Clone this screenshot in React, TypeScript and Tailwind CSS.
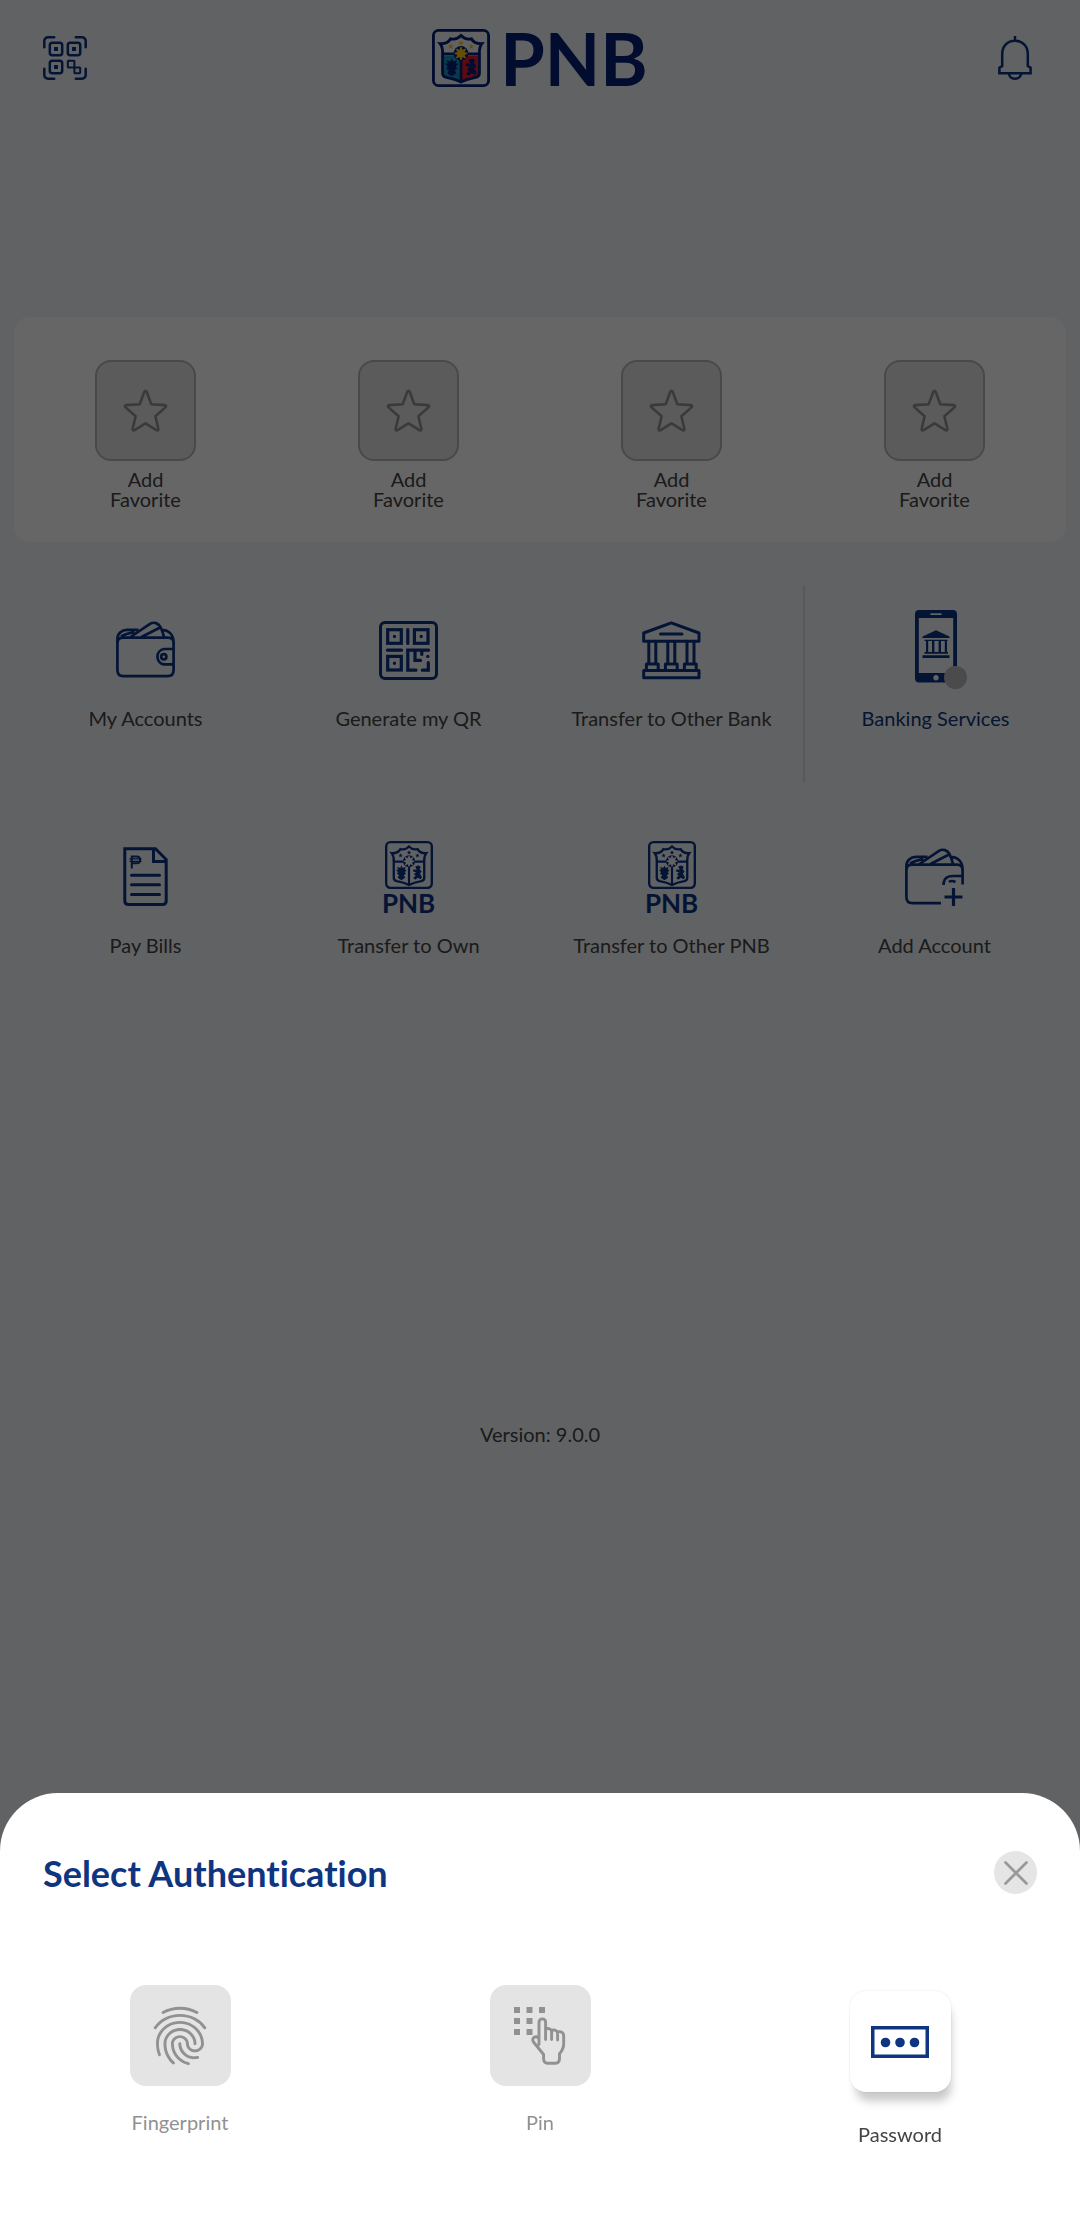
import type { ReactNode } from "react";
import { MdFingerprint } from "react-icons/md";

const SHIELD =
  "M28.5 6.5C25.5 9.6 22 10.6 18.3 9.6C16.4 13 12.6 14.7 8 14.4C10.4 17.5 10.6 20.5 10.4 24V43.5C10.4 46 11.6 47 14 47.6C19.5 48.6 24 49.8 28.5 52.2C33 49.8 37.5 48.6 43 47.6C45.4 47 46.6 46 46.6 43.5V24C46.4 20.5 46.6 17.5 49 14.4C44.4 14.7 40.6 13 38.7 9.6C35 10.6 31.5 9.6 28.5 6.5Z";
const EAGLE =
  "M19.5 29L21 32L24.5 30.5L23.5 34L26 34L23.5 37L25 39L22.3 40.5L24 43.5L19.5 46.5L15 43.5L16.7 40.5L14 39L15.5 37L13 34L15.5 34L14.5 30.5L18 32Z";
const LION =
  "M36 30L40 29L42.5 31L41 33.5L43.5 36L41.5 39L44 43L42 45.5L39 43.5L36 46L33.5 44L36.5 41L34 39.5L37 37.5L33 36L34 33.5L37.5 34.5Z";

function star(cx: number, cy: number, r: number) {
  return Array.from({ length: 10 }, (_, i) => {
    const a = (Math.PI / 5) * i - Math.PI / 2;
    const d = i % 2 ? r * 0.42 : r;
    return `${(cx + d * Math.cos(a)).toFixed(2)},${(cy + d * Math.sin(a)).toFixed(2)}`;
  }).join(" ");
}

function sunburst(cx: number, cy: number, outer: number, inner: number) {
  return Array.from({ length: 32 }, (_, i) => {
    const a = (Math.PI / 16) * i - Math.PI / 32;
    const d = i % 4 < 2 ? outer : inner;
    return `${(cx + d * Math.cos(a)).toFixed(2)},${(cy + d * Math.sin(a)).toFixed(2)}`;
  }).join(" ");
}

function Emblem({ colored = false, className }: { colored?: boolean; className: string }) {
  const gold = colored ? "#ffc20e" : "currentColor";
  return (
    <svg viewBox="0 0 57 57" className={className} fill="none" stroke="currentColor" aria-hidden="true">
      <rect x="1.4" y="1.4" width="54.2" height="54.2" rx="5" strokeWidth="2.8" />
      {colored && (
        <>
          <path d="M10 26H28V52L13 47L10 45Z" fill="#1695c4" stroke="none" />
          <path d="M29 26H47V45L44 47L29 52Z" fill="#e31b2b" stroke="none" />
        </>
      )}
      <path d={SHIELD} strokeWidth="2.8" />
      <path d="M10 24.5H47M28.5 24V52" strokeWidth="2.6" />
      <path d={EAGLE} fill="currentColor" stroke="none" />
      <path d={LION} fill="currentColor" stroke="none" />
      <circle cx="28.5" cy="24" r="7.2" fill="currentColor" stroke="none" />
      <polygon points={sunburst(28.5, 24, 6.4, 4.2)} fill={colored ? gold : "#f3f5f7"} stroke="none" />
      <polygon points={star(18.5, 17.2, 2.8)} fill={gold} stroke="none" />
      <polygon points={star(28.5, 13.8, 2.8)} fill={gold} stroke="none" />
      <polygon points={star(38.5, 17.2, 2.8)} fill={gold} stroke="none" />
    </svg>
  );
}

function ScanIcon() {
  return (
    <svg viewBox="0 0 44 44" className="size-11" fill="none" stroke="currentColor" strokeWidth="2.5" strokeLinecap="round" aria-hidden="true">
      <path d="M1.3 11.2V5A3.7 3.7 0 0 1 5 1.3H11.2M32.8 1.3H39A3.7 3.7 0 0 1 42.7 5V11.2M42.7 32.8V39A3.7 3.7 0 0 1 39 42.7H32.8M11.2 42.7H5A3.7 3.7 0 0 1 1.3 39V32.8" />
      <rect x="6.8" y="6.8" width="12.4" height="12.4" rx="2.5" />
      <rect x="24.8" y="6.8" width="12.4" height="12.4" rx="2.5" />
      <rect x="6.8" y="24.8" width="12.4" height="12.4" rx="2.5" />
      <rect x="24.8" y="24.8" width="6.6" height="6.6" rx="0.6" strokeWidth="2" />
      <rect x="31.4" y="31.4" width="5.8" height="5.8" rx="0.6" strokeWidth="2" />
      <path d="M11 11H15V15H11ZM29 11H33V15H29ZM11 29H15V33H11Z" fill="currentColor" stroke="none" />
    </svg>
  );
}

function BellIcon() {
  return (
    <svg viewBox="0 0 34 44" className="h-11 w-[34px]" fill="none" stroke="currentColor" strokeWidth="2.5" aria-hidden="true">
      <path d="M17 0V5M4.2 30V18C4.2 10.2 9.6 4.8 17 4.8S29.8 10.2 29.8 18V30L32.6 31.8V37.3H1.4V31.8Z" />
      <path d="M10.8 37.6C11.4 41 13.8 42.7 17 42.7S22.6 41 23.2 37.6" />
    </svg>
  );
}

function StarIcon() {
  return (
    <svg viewBox="-1 -1 45 43" className="h-[43px] w-[45px]" fill="none" stroke="currentColor" strokeWidth="2.6" strokeLinejoin="round" aria-hidden="true">
      <path d="M20.3 1.8Q21.5 -.2 22.7 1.8L27.3 14.2L40.8 15.1Q43 15.7 41.4 17.4L31.4 26.3L34.4 39Q34.4 41.2 32.4 40.2L21.5 33.3L10.6 40.2Q8.6 41.2 8.6 39L11.6 26.3L1.6 17.4Q0 15.7 2.2 15.1L15.7 14.2Z" />
    </svg>
  );
}

const walletTop =
  "M2.4 22V18C2.4 12.500 6.500 8.900 12 8.900H23.500M6 15.700C10.500 12.800 15 12 19.500 11.200M15.500 16L35 2.900C39 .400 43.500 2.400 45.400 5.800Q47.600 10 49 16M26.500 16L44.600 6.800M46 8.900C53 8.900 58.600 12.500 58.600 22M2.400 22Q2.400 16.600 8 16.600H53Q58.600 16.600 58.600 22";

function WalletIcon() {
  return (
    <svg viewBox="0 0 61 58" className="h-[58px] w-[61px]" fill="none" stroke="currentColor" strokeWidth="2.7" aria-hidden="true">
      <path d={walletTop} />
      <path d="M2.4 21V49Q2.4 55.2 8.5 55.2H52.5Q58.6 55.2 58.6 49V21" />
      <path d="M58.6 28H49A7.8 7.8 0 0 0 49 43.4H58.6" />
      <circle cx="48.8" cy="35.7" r="2.6" />
    </svg>
  );
}

function WalletPlusIcon() {
  return (
    <svg viewBox="0 0 61 58" className="h-[58px] w-[61px]" fill="none" stroke="currentColor" strokeWidth="2.7" aria-hidden="true">
      <path d={walletTop} />
      <path d="M2.4 21V49Q2.4 55.2 8.5 55.2H37M58.6 21V36.5" />
      <path d="M39.6 37V35Q40.5 28 49 28H58.6M45 34Q47.5 32 51.5 34" />
      <path d="M49.5 40V58M40.5 49H58.5" strokeWidth="3.2" />
    </svg>
  );
}

function QrIcon() {
  return (
    <svg viewBox="0 0 59 59" className="size-[59px]" fill="none" stroke="currentColor" strokeWidth="3.2" strokeLinecap="round" aria-hidden="true">
      <rect x="1.5" y="1.5" width="56" height="56" rx="4.5" strokeWidth="3" />
      <rect x="8.7" y="8.7" width="13.6" height="13.6" />
      <rect x="35.4" y="8.7" width="13.6" height="13.6" />
      <rect x="8.7" y="35.4" width="13.6" height="13.6" />
      <path d="M28.8 8.5V22.5M8.5 29.2H22.5M49.5 29.2H28.8V49.2H37M36 29.2V39.4H41.5M42.8 29.2V33.5M49.3 41.5V49.2H43.3" />
      <path d="M15.5 15.5h.01M42.2 15.5h.01M15.5 42.2h.01M48.8 35.4h.01" strokeWidth="3.4" />
    </svg>
  );
}

function BankIcon() {
  return (
    <svg viewBox="0 0 59 59" className="size-[59px]" fill="none" stroke="currentColor" strokeWidth="3" strokeLinejoin="round" strokeLinecap="round" aria-hidden="true">
      <path d="M1.7 12L29.3 1.9L57 12V20.3H1.7ZM18.5 13H40" />
      <path d="M6.8 20.3V42M13.8 20.3V42M25.8 20.3V42M32.8 20.3V42M45 20.3V42M52 20.3V42" />
      <path d="M4.4 49V43H16.2V49M23.4 49V43H35.2V49M42.4 49V43H54.2V49" />
      <rect x="1.7" y="49.4" width="55.3" height="7.4" />
    </svg>
  );
}

function PhoneBankIcon() {
  return (
    <svg viewBox="0 0 64 80" className="h-20 w-16" fill="currentColor" aria-hidden="true">
      <path
        fillRule="evenodd"
        d="M15 0H49Q53 0 53 4V68.500Q53 72.500 49 72.500H15Q11 72.500 11 68.500V4Q11 0 15 0ZM14.800 8V63H49.200V8ZM26.500 3.200V5H37.500V3.200ZM32 65A2.700 2.700 0 1 0 32 70.400A2.700 2.700 0 1 0 32 65Z"
      />
      <path d="M18.500 26.500L32 20.300L45.500 26.500V28H18.500ZM20.500 29.700H43.500V31H20.500ZM22 31H24.200V42H22ZM28 31H30.400V42H28ZM34.600 31H37V42H34.600ZM40.800 31H43V42H40.800ZM20.500 42H44V43.700H20.500ZM18.500 45.200H45.500V48H18.500Z" />
      <circle cx="51.500" cy="67.500" r="11.500" fill="#bbbbbb" />
    </svg>
  );
}

function BillIcon() {
  return (
    <svg viewBox="0 0 45 60" className="h-[60px] w-[45px]" fill="none" stroke="currentColor" strokeWidth="3" strokeLinecap="round" aria-hidden="true">
      <path d="M1.8 1.8H32.500L43.200 12.500V54Q43.200 57.600 39.500 57.600H5.500Q1.800 57.600 1.800 54ZM30.500 2V14.400H43M8.500 28.200H36.500M8.500 37.800H36.500M8.500 47.400H36.500" />
      <path d="M8.800 21.500V9.500H13.500C18.300 9.500 18.300 16.300 13.500 16.300H8.800" strokeWidth="2" strokeLinecap="butt" />
      <path d="M6.500 11.800H18.500M6.500 14.400H18.500" strokeWidth="1.300" strokeLinecap="butt" />
    </svg>
  );
}

function PnbIcon() {
  return (
    <span className="flex flex-col items-center gap-1">
      <Emblem className="size-12" />
      <span className="text-[26px] leading-5 font-bold">PNB</span>
    </span>
  );
}

function PinIcon() {
  return (
    <svg viewBox="0 0 52 58" className="h-[58px] w-[52px]" fill="none" stroke="currentColor" strokeWidth="2.900" strokeLinejoin="round" strokeLinecap="round" aria-hidden="true">
      <path
        d="M0 0H6V6H0ZM12.500 0H18.500V6H12.500ZM25 0H31V6H25ZM0 11H6V17H0ZM12.500 11H18.500V17H12.500ZM0 22H6V28H0ZM12.500 22H18.500V28H12.500Z"
        fill="currentColor"
        stroke="none"
      />
      <path d="M25 37.500V15.200A3.300 3.300 0 0 1 31.600 15.200V32.500M31.600 21.700C35 21 37.600 22 37.600 25V32.500M37.600 23.200C41 22.500 43.600 23.500 43.600 26.500V33M43.600 24.800C47.500 24.200 49.700 25.500 49.700 29V36.500C49.700 41 48.500 43.500 45.500 46.800V51.500C45.500 55 44 56.200 41.500 56.200H33.500C31 56.200 29.600 55 29.600 51.500V47.500L19.500 35C17.500 32 20 29.500 22.500 29.800L25 31.500" />
    </svg>
  );
}

function PasswordIcon() {
  return (
    <svg viewBox="0 0 58 32" className="h-8 w-[58px]" fill="none" stroke="currentColor" strokeWidth="3.500" aria-hidden="true">
      <rect x="1.750" y="1.750" width="54.500" height="28.500" />
      <path d="M14.500 16.500h.01M29 16.500h.01M43.500 16.500h.01" strokeWidth="9.600" strokeLinecap="round" />
    </svg>
  );
}

type Service = { label: string; icon: ReactNode; highlighted?: boolean };

const services: Service[] = [
  { label: "My Accounts", icon: <WalletIcon /> },
  { label: "Generate my QR", icon: <QrIcon /> },
  { label: "Transfer to Other Bank", icon: <BankIcon /> },
  { label: "Banking Services", icon: <PhoneBankIcon />, highlighted: true },
  { label: "Pay Bills", icon: <BillIcon /> },
  { label: "Transfer to Own", icon: <PnbIcon /> },
  { label: "Transfer to Other PNB", icon: <PnbIcon /> },
  { label: "Add Account", icon: <WalletPlusIcon /> },
];

function ServiceButton({ label, icon, highlighted }: Service) {
  return (
    <button
      type="button"
      className={
        highlighted
          ? "flex h-[198px] flex-col items-center gap-4 border-l-2 border-[#dcdee0] pt-[25px] text-[#0f3580]"
          : "flex h-[198px] flex-col items-center gap-4 pt-[25px] text-[#444444]"
      }
    >
      <span className="flex h-20 items-center justify-center text-[#0c3384]">{icon}</span>
      <span className="text-xl leading-6 whitespace-nowrap">{label}</span>
    </button>
  );
}

export default function App() {
  return (
    <div className="min-h-screen bg-[#f3f5f7] font-['Lato','Liberation_Sans',sans-serif] text-[#444444] [font-variant-ligatures:none]">
      <header className="flex items-center justify-between px-[43px] pt-[29px] text-[#0c3384]">
        <button type="button" aria-label="Scan QR code">
          <ScanIcon />
        </button>
        <h1 className="flex items-center gap-2.5 text-[#031e73]">
          <Emblem colored className="size-[58px]" />
          <span className="text-[72px] leading-[56px] font-bold">PNB</span>
        </h1>
        <button type="button" aria-label="Notifications" className="flex w-11 justify-center">
          <BellIcon />
        </button>
      </header>

      <main>
        <section aria-label="Favorites" className="mx-3.5 mt-[230px] grid grid-cols-4 rounded-2xl bg-white pt-[43px] pb-[33px]">
          {[1, 2, 3, 4].map((slot) => (
            <button key={slot} type="button" className="flex flex-col items-center gap-2">
              <span className="flex size-[101px] items-center justify-center rounded-2xl border-2 border-[#b6b6b6] bg-[#e4e4e4] text-[#919191]">
                <StarIcon />
              </span>
              <span className="w-20 text-xl leading-5">Add Favorite</span>
            </button>
          ))}
        </section>

        <section aria-label="Services" className="mx-3.5 mt-[43px] grid grid-cols-4 gap-y-[29px]">
          {services.map((service) => (
            <ServiceButton key={service.label} {...service} />
          ))}
        </section>

        <p className="mt-[412px] text-center text-xl leading-6">Version: 9.0.0</p>
      </main>

      <div className="fixed inset-0 flex flex-col justify-end bg-black/60">
        <section
          role="dialog"
          aria-modal="true"
          aria-labelledby="auth-title"
          className="rounded-t-[58px] bg-white pt-[58px] pb-[68px]"
        >
          <div className="flex items-center justify-between px-[43px]">
            <h2 id="auth-title" className="text-[36px] leading-10 font-bold text-[#0f3580]">
              Select Authentication
            </h2>
            <button
              type="button"
              aria-label="Close"
              className="flex size-[43px] items-center justify-center rounded-full bg-[#e5e5e5] text-[#999999]"
            >
              <svg viewBox="0 0 24 24" className="size-6" fill="none" stroke="currentColor" strokeWidth="2.700" strokeLinecap="round" aria-hidden="true">
                <path d="M1.500 1.500L22.500 22.500M22.500 1.500L1.500 22.500" />
              </svg>
            </button>
          </div>

          <div className="mt-[91px] grid grid-cols-3 items-start text-xl leading-6 text-[#919191]">
            <button type="button" className="flex flex-col items-center gap-6">
              <span className="flex size-[101px] items-center justify-center rounded-2xl bg-[#e4e4e4]">
                <MdFingerprint className="size-[70px]" />
              </span>
              Fingerprint
            </button>
            <button type="button" className="flex flex-col items-center gap-6">
              <span className="flex size-[101px] items-center justify-center rounded-2xl bg-[#e4e4e4]">
                <PinIcon />
              </span>
              Pin
            </button>
            <button type="button" className="flex flex-col items-center gap-[30px] pt-1.5 text-[#444444]">
              <span className="flex size-[101px] items-center justify-center rounded-2xl bg-white text-[#0f3580] shadow-[3px_12px_10px_-3px_rgba(0,0,0,0.22),0_0_2px_rgba(0,0,0,0.12)]">
                <PasswordIcon />
              </span>
              Password
            </button>
          </div>
        </section>
      </div>
    </div>
  );
}
